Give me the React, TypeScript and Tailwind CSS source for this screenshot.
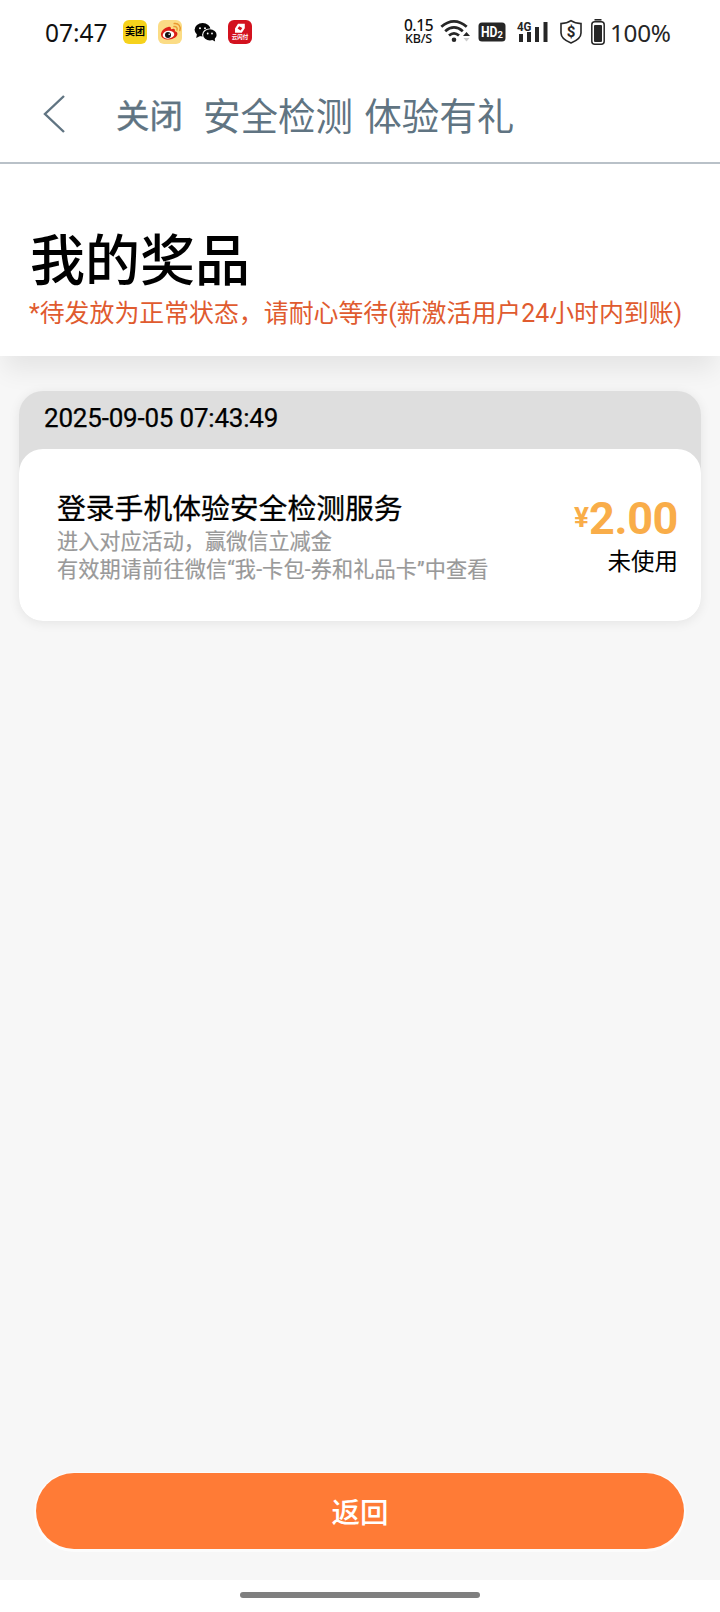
import React from "react";

function StatusLeft() {
  return (
    <div className="flex items-center pl-[45px]">
      <span className="w-[78px] pt-px font-['Noto_Sans',sans-serif] text-[24.5px] leading-[30px] text-[#111]">07:47</span>
      <span className="flex h-6 w-6 items-center justify-center rounded-[6px] bg-[#f6d21c] text-[10px] font-bold leading-none text-black">美团</span>
      <svg className="ml-[11px]" width="24" height="24" viewBox="0 0 24 24">
        <rect width="24" height="24" rx="6" fill="#fbdc85" />
        <path d="M10.2 7C5.5 8 2.6 12 3 15c.4 3.200 4.200 4.800 8 4.500 4.300-.3 8.400-2.500 8.400-5.700 0-1.500-1.200-2.200-2.600-2.500.8-2.200-.7-3.200-3.800-2C13 6.900 12 6.500 10.200 7z" fill="#dc2118" />
        <ellipse cx="10.500" cy="14.700" rx="5.800" ry="3.900" fill="#fff" transform="rotate(-8 10.500 14.700)" />
        <circle cx="10" cy="14.900" r="3" fill="#111" />
        <circle cx="11.200" cy="14.200" r=".8" fill="#fff" />
        <path d="M16 6.600c2.400-.3 3.700 1.300 3 3.500M16.200 3.600c4.600-.5 7 2.800 5.600 7" fill="none" stroke="#e99a32" strokeWidth="1.500" strokeLinecap="round" />
      </svg>
      <svg className="ml-3" width="24" height="24" viewBox="0 0 24 24">
        <ellipse cx="8.600" cy="9.700" rx="8" ry="6.800" fill="#050505" />
        <path d="M3 14l-.8 4 4.500-2.200z" fill="#050505" />
        <ellipse cx="15.600" cy="14.800" rx="7.500" ry="6.400" fill="#fff" />
        <ellipse cx="15.900" cy="14.900" rx="6.700" ry="5.600" fill="#050505" />
        <path d="M17.500 19.500l3.600 2-.6-4z" fill="#050505" />
        <circle cx="6" cy="8.200" r="1" fill="#fff" />
        <circle cx="11" cy="8.200" r="1" fill="#fff" />
        <circle cx="13.700" cy="13.500" r=".9" fill="#fff" />
        <circle cx="18" cy="13.500" r=".9" fill="#fff" />
      </svg>
      <span className="ml-[10px] flex h-6 w-6 flex-col items-center rounded-[6px] bg-[#d3121f] pt-[3px] text-white">
        <svg width="12" height="11" viewBox="0 0 12 11">
          <path fillRule="evenodd" d="M4 .8H10.800V5.200L7.800 9.800H1V5.400zM5.200 3.200 3.600 5.600 6.600 7.400 8.300 4.900z" fill="#fff" />
        </svg>
        <span className="flex h-[7px] w-6 items-center justify-center whitespace-nowrap text-[5.500px] font-bold leading-none">云闪付</span>
      </span>
    </div>
  );
}

function StatusRight() {
  return (
    <div className="flex items-center pr-[46px] text-[#262626]">
      <div className="flex h-[30px] w-[31px] flex-col items-center font-['Noto_Sans',sans-serif] font-medium text-[#111]">
        <span className="h-[15px] text-[15.500px] leading-[17px] tracking-[-0.4px]">0.15</span>
        <span className="h-[15px] text-[12.500px] leading-[13px] tracking-[-0.2px]">KB/S</span>
      </div>
      <svg className="ml-[6px]" width="30" height="26" viewBox="0 0 30 26">
        <g fill="none" stroke="#262626" strokeWidth="2.800">
          <path d="M1.300 7.800Q14 -3 26.700 7.800" />
          <path d="M5.200 12.200Q14 4.600 22.800 12.200" />
          <path d="M9 16.500Q14 12.200 19 16.500" />
        </g>
        <circle cx="14" cy="20.800" r="2.300" fill="#262626" />
        <path d="M23 17l3.500-4 3.500 4z" fill="#262626" />
        <path d="M23.500 19h6l-3 3.500z" fill="#ccc" />
      </svg>
      <svg className="ml-2" width="28" height="26" viewBox="0 0 28 26">
        <rect x="0.500" y="3.500" width="27" height="19" rx="3.500" fill="#262626" />
        <text x="3" y="18" fill="#fff" fontFamily="Roboto, sans-serif" fontWeight="700" fontSize="14" textLength="16.500" lengthAdjust="spacingAndGlyphs">HD</text>
        <text x="19.500" y="18.500" fill="#fff" fontFamily="Roboto, sans-serif" fontWeight="700" fontSize="9.500">2</text>
      </svg>
      <svg className="ml-[11px] overflow-visible" width="33" height="26" viewBox="0 0 33 26">
        <text x="0" y="12" fill="#262626" fontFamily="Roboto, sans-serif" fontWeight="700" fontSize="13.500" textLength="14.500" lengthAdjust="spacingAndGlyphs">4G</text>
        <path d="M2 15h4v8H2zM10 13h4v10h-4zM18 8h4v15h-4zM26.500 3h4v20h-4z" fill="#262626" />
      </svg>
      <svg className="ml-[9px]" width="24" height="26" viewBox="0 0 24 26">
        <path d="M12 1.700C9 3.800 5.300 4.500 2 4.600V14c0 5.200 5 8 10 10 5-2 10-4.800 10-10V4.600C18.700 4.500 15 3.800 12 1.700z" fill="none" stroke="#262626" strokeWidth="1.600" />
        <text x="12" y="18.200" textAnchor="middle" fill="#262626" fontFamily="Roboto, sans-serif" fontWeight="700" fontSize="15">$</text>
      </svg>
      <svg className="ml-2" width="14" height="26" viewBox="0 0 14 26">
        <path d="M3.500 .8h7" stroke="#262626" strokeWidth="1.600" />
        <rect x=".8" y="2.800" width="12.400" height="22.400" rx="3" fill="none" stroke="#262626" strokeWidth="1.500" />
        <rect x="3" y="6" width="8" height="17" rx="1" fill="#262626" />
      </svg>
      <span className="ml-[5px] w-[64px] whitespace-nowrap pt-px font-['Noto_Sans',sans-serif] text-[24.3px] leading-[30px] tracking-[-0.300px]">100%</span>
    </div>
  );
}

function NavigationBar() {
  return (
    <header className="flex h-[100px] items-center border-b-2 border-[#b9c1c8] text-[#607482]">
      <svg className="ml-[42px] mt-[2px]" width="24" height="40" viewBox="0 0 24 40" fill="none" stroke="#607482" strokeWidth="2.400">
        <path d="M22 2 3 20l19 18" />
      </svg>
      <span className="ml-[50px] w-[87px] pt-[7px] text-[33.500px] leading-[40px] [-webkit-text-stroke:0.4px_#607482]">关闭</span>
      <h1 className="whitespace-nowrap pt-[7px] text-[37.500px] font-normal leading-[44px] [word-spacing:2px]">安全检测 体验有礼</h1>
    </header>
  );
}

function PrizeCard() {
  return (
    <article className="mx-[19px] mt-[35px] rounded-[24px] bg-[#dedede] shadow-[0_2px_12px_rgba(0,0,0,0.08)]">
      <time className="block h-[58px] pl-[25px] pt-[10px] font-[Roboto,sans-serif] text-[26px] font-normal leading-[34px] tracking-[-0.2px] text-black [-webkit-text-stroke:0.25px_#000]">2025-09-05 07:43:49</time>
      <div className="flex h-[172px] justify-between rounded-[24px] bg-white pl-[38px] pr-[23px]">
        <div className="pt-[41px]">
          <h2 className="text-[28.800px] font-normal leading-[38px] text-black [-webkit-text-stroke:0.3px_#000]">登录手机体验安全检测服务</h2>
          <p className="text-[21.150px] leading-[28px] text-[#999] [-webkit-text-stroke:0.2px_#999]">进入对应活动，赢微信立减金</p>
          <p className="whitespace-nowrap text-[21.150px] leading-[28px] tracking-[0.14px] text-[#999] [-webkit-text-stroke:0.2px_#999]">有效期请前往微信“我-卡包-券和礼品卡”中查看</p>
        </div>
        <div className="flex flex-col items-end pt-[46px]">
          <div className="flex h-[50px] items-baseline font-[Roboto,sans-serif] font-bold leading-[48px] text-[#f9ad49]">
            <span className="relative -top-[7px] text-[28px]">¥</span>
            <span className="text-[45px] tracking-[-0.4px]">2.00</span>
          </div>
          <span className="text-[23.500px] leading-[34px] text-black">未使用</span>
        </div>
      </div>
    </article>
  );
}

export default function App() {
  return (
    <div className="flex h-[1612px] w-[720px] flex-col overflow-hidden bg-white font-[Roboto,'Noto_Sans_CJK_SC',sans-serif]">
      <div className="flex h-[64px] items-center justify-between">
        <StatusLeft />
        <StatusRight />
      </div>
      <NavigationBar />
      <main className="flex flex-1 flex-col bg-[#f7f7f7]">
        <section className="h-[192px] bg-white pt-[61px] shadow-[0_18px_24px_-4px_rgba(0,0,0,0.075)]">
          <h2 className="pl-[30px] text-[55px] font-medium leading-[72px] text-black">我的奖品</h2>
          <p className="whitespace-nowrap pl-[29px] text-[24.9px] leading-[34px] text-[#e05b2f]">*待发放为正常状态，请耐心等待(新激活用户24小时内到账)</p>
        </section>
        <PrizeCard />
        <button className="mx-9 mb-[31px] mt-auto h-[76px] rounded-full bg-[#ff7b36] pt-[5px] text-[28.500px] font-medium leading-[40px] text-white shadow-[0_1px_0_2px_rgba(255,255,255,0.65)]">返回</button>
      </main>
      <footer className="flex h-8 justify-center pt-3">
        <div className="h-[6px] w-[240px] rounded-full bg-[#7f7f7f]" />
      </footer>
    </div>
  );
}
